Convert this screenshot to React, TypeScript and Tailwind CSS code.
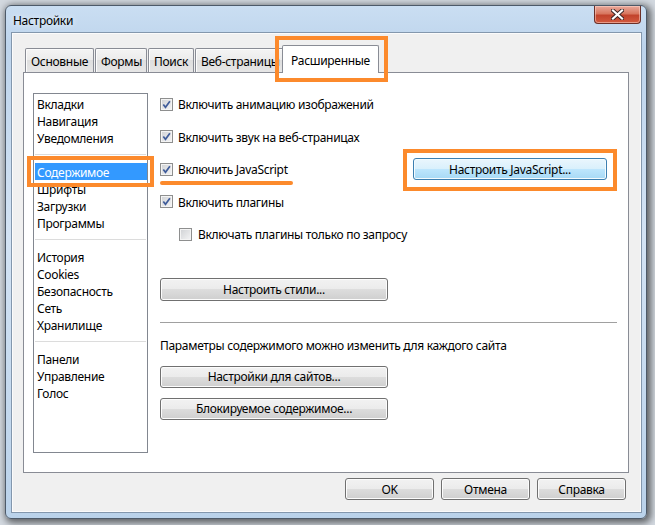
import React from "react";

const btn =
  "flex items-center justify-center rounded-[3px] border border-[#707070] bg-[linear-gradient(#f2f2f2,#ebebeb_50%,#dddddd_50%,#cfcfcf)] shadow-[inset_0_0_0_1px_#fcfcfc] text-[12px] text-black pt-[1px]";

const groups = [
  ["Вкладки", "Навигация", "Уведомления"],
  ["Содержимое", "Шрифты", "Загрузки", "Программы"],
  ["История", "Cookies", "Безопасность", "Сеть", "Хранилище"],
  ["Панели", "Управление", "Голос"],
];

function Check({ checked }: { checked?: boolean }) {
  return (
    <span className="relative flex h-[13px] w-[13px] shrink-0 items-center justify-center border border-[#8e8f8f] bg-[linear-gradient(135deg,#cfd1d4,#f5f5f6)] shadow-[inset_0_0_0_1px_#f4f4f4]">
      {checked && (
        <svg width="11" height="11" viewBox="0 0 11 11" className="absolute">
          <path d="M2.3 5.4 L4.5 8.3 L8.9 2.2" fill="none" stroke="#3f5c9a" strokeWidth="1.7" />
        </svg>
      )}
    </span>
  );
}

function Tab({ label, w, ml }: { label: string; w: string; ml: string }) {
  return (
    <div
      className={`${w} ${ml} h-[24px] shrink-0 overflow-hidden whitespace-nowrap rounded-t-[2px] border border-b-0 border-[#898c95] bg-[linear-gradient(#f4f4f4,#ebebeb_50%,#dedede_50%,#e6e6e6)] pl-[5px] pt-[5px] text-[12px] leading-[16px] shadow-[inset_1px_1px_0_#fcfcfc]`}
    >
      {label}
    </div>
  );
}

export default function App() {
  return (
    <div className="relative h-[525px] w-[655px] overflow-hidden bg-[#d3d9e0] pl-[5px] pt-[5px] font-['Noto_Sans',sans-serif] tracking-[-0.3px] text-black">
      {/* window frame */}
      <div className="h-[514px] w-[642px] rounded-[6px] border border-[#4d5a69] bg-[linear-gradient(180deg,#cadef2_0%,#bdd4ec_8%,#d3e3f4_45%,#bad2ea_100%)] shadow-[2px_2px_7px_2px_rgba(0,0,0,0.55)]">
        <div className="flex h-[27px] items-start">
          <span className="ml-[7px] mt-[7px] text-[12px] leading-[16px] [text-shadow:0_0_6px_#ffffff]">Настройки</span>
          <div className="ml-auto mr-[5px] flex h-[18px] w-[47px] items-center justify-center rounded-b-[4px] border border-t-0 border-[#6b2f28] bg-[linear-gradient(#e9a99b,#d8775f_45%,#c2432c_55%,#d25a3f)] shadow-[inset_0_0_0_1px_rgba(255,220,210,0.5)]">
            <svg width="13" height="11" viewBox="0 0 13 11">
              <path d="M2 1.5 L11 9.5 M11 1.5 L2 9.5" stroke="#3a2424" strokeWidth="4" strokeLinecap="square" />
              <path d="M2 1.5 L11 9.5 M11 1.5 L2 9.5" stroke="#ffffff" strokeWidth="2.2" strokeLinecap="square" />
            </svg>
          </div>
        </div>

        {/* client area */}
        <div className="ml-[6px] h-[479px] w-[629px] bg-[#f0f0f0] shadow-[0_0_0_1px_#8397ad,inset_0_0_0_1px_#fbfbfb]">
          <div className="flex h-[39px] items-end pl-[13px]">
            <Tab label="Основные" w="w-[69px]" ml="ml-0" />
            <Tab label="Формы" w="w-[52px]" ml="ml-[1px]" />
            <Tab label="Поиск" w="w-[46px]" ml="ml-[1px]" />
            <Tab label="Веб-страницы" w="w-[90px]" ml="ml-[1px]" />
            <div className="relative z-10 -mb-px ml-[-3px] h-[28px] w-[97px] shrink-0 rounded-t-[2px] border border-b-0 border-[#898c95] bg-white pt-[7px] text-center text-[12px] leading-[16px]">
              Расширенные
            </div>
          </div>

          <div className="ml-[11px] h-[401px] w-[606px] border border-[#898c95] bg-white">
            <div className="flex items-start pl-[9px] pt-[15px]">
              <div className="mt-[5px] h-[360px] w-[115px] border border-[#828790] bg-white pt-[1px] text-[12px]">
                {groups.map((g, gi) => (
                  <div key={gi}>
                    {gi > 0 && (
                      <div className="flex h-[17px] items-center">
                        <div className="mx-[1px] h-px w-full bg-[#dcdcdc]" />
                      </div>
                    )}
                    {g.map((item) => (
                      <div
                        key={item}
                        className={`ml-[1px] h-[17px] whitespace-nowrap pl-[2px] pt-[1px] leading-[17px] ${
                          item === "Содержимое" ? "bg-[#3399ff] text-white" : ""
                        }`}
                      >
                        {item}
                      </div>
                    ))}
                  </div>
                ))}
              </div>

              <div className="ml-[12px] flex w-[457px] flex-col text-[12px]">
                <div className="flex h-[32.5px] items-center gap-[5px]">
                  <Check checked />
                  <span className="pt-[2px]">Включить анимацию изображений</span>
                </div>
                <div className="flex h-[32.5px] items-center gap-[5px]">
                  <Check checked />
                  <span className="pt-[2px]">Включить звук на веб-страницах</span>
                </div>
                <div className="flex h-[32.5px] items-center">
                  <Check checked />
                  <span className="ml-[5px] w-[235px] pt-[2px]">Включить JavaScript</span>
                  <div className="flex h-[22px] w-[194px] items-center justify-center rounded-[3px] border border-[#3c7fb1] bg-[linear-gradient(#eaf6fd,#d9f0fc_50%,#bee6fd_50%,#a7d9f5)] pt-[1px] shadow-[inset_0_0_0_1px_#f4fbfe]">
                    Настроить JavaScript...
                  </div>
                </div>
                <div className="flex h-[32.5px] items-center gap-[5px]">
                  <Check checked />
                  <span className="pt-[2px]">Включить плагины</span>
                </div>
                <div className="flex h-[32.5px] items-center gap-[6px] pl-[19px]">
                  <Check />
                  <span className="pt-[2px]">Включать плагины только по запросу</span>
                </div>

                <div className={`${btn} mt-[27px] h-[23px] w-[228px]`}>Настроить стили...</div>
                <div className="mt-[21px] h-px w-[457px] bg-[#a0a0a0]" />
                <div className="mt-[15px] leading-[16px]">Параметры содержимого можно изменить для каждого сайта</div>
                <div className={`${btn} mt-[12px] h-[22px] w-[228px]`}>Настройки для сайтов...</div>
                <div className={`${btn} mt-[10px] h-[22px] w-[228px]`}>Блокируемое содержимое...</div>
              </div>
            </div>
          </div>

          <div className="mt-[5px] flex justify-end gap-[7px] pr-[15px]">
            <div className={`${btn} h-[22px] w-[89px] border-[#3c7fb1] shadow-[inset_0_0_0_1px_#bfe9fb,inset_0_0_0_2px_#e7f6fd]`}>OK</div>
            <div className={`${btn} h-[22px] w-[89px]`}>Отмена</div>
            <div className={`${btn} h-[22px] w-[89px]`}>Справка</div>
          </div>
        </div>
      </div>

      {/* orange annotation overlays */}
      <div className="absolute left-[275px] top-[36px] z-20 h-[46px] w-[113px] border-[4px] border-[#fc8a2c]" />
      <div className="absolute left-[27px] top-[156px] z-20 h-[31px] w-[127px] border-[4px] border-[#fc8a2c]" />
      <div className="absolute left-[403px] top-[149px] z-20 h-[42px] w-[214px] border-[4px] border-[#fc8a2c]" />
      <div className="absolute left-[160px] top-[181px] z-20 h-[4px] w-[133px] rounded-full bg-[#fc8a2c]" />
    </div>
  );
}
